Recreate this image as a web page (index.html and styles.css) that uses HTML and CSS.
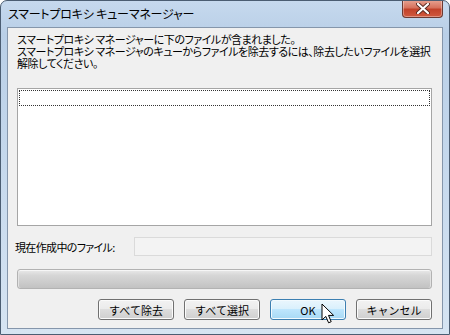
FILE: index.html
```html
<!DOCTYPE html>
<html lang="ja">
<head>
    <meta charset="UTF-8">
    <meta name="viewport" content="width=device-width, initial-scale=1.0">
    <title>スマートプロキシ キューマネージャー</title>
    <link rel="stylesheet" href="styles.css">
</head>
<body>
    <div class="window">
        <div class="titlebar">
            <span class="title">スマートプロキシ キューマネージャー</span>
            <div class="close">
                <svg width="14" height="11" viewBox="0 0 14 11">
                    <path d="M2 1 L12 10 M12 1 L2 10" stroke="#5a2a22" stroke-width="4" stroke-linecap="round"/>
                    <path d="M2 1 L12 10 M12 1 L2 10" stroke="#ffffff" stroke-width="2.2" stroke-linecap="round"/>
                </svg>
            </div>
        </div>

        <div class="client">
            <div class="message">
                <p>スマートプロキシ マネージャーに下のファイルが含まれました。</p>
                <p>スマートプロキシ マネージャのキューからファイルを除去するには、除去したいファイルを選択</p>
                <p>解除してください。</p>
            </div>

            <div class="listbox">
                <div class="list-row focused"></div>
            </div>

            <div class="field-row">
                <span class="field-label">現在作成中のファイル:</span>
                <div class="textbox"></div>
            </div>

            <div class="progress"></div>

            <div class="buttons">
                <button class="btn">すべて除去</button>
                <button class="btn">すべて選択</button>
                <button class="btn btn-hover">OK</button>
                <button class="btn">キャンセル</button>
            </div>
        </div>

        <!-- mouse pointer over the OK button -->
        <svg class="cursor" width="14" height="22" viewBox="0 0 14 22">
            <path d="M1 1 L1 17 L4.8 13.4 L7.6 19.8 L10.2 18.7 L7.5 12.4 L12.6 12.4 Z" fill="#ffffff" stroke="#000000" stroke-width="1" stroke-linejoin="miter"/>
        </svg>
    </div>
</body>
</html>
```

FILE: styles.css
```css
body {
    margin: 0;
    background-color: #ffffff;
    font-family: "Noto Sans CJK JP", "Noto Sans", sans-serif;
    font-feature-settings: "palt";
}
.window {
    position: relative;
    width: 450px;
    height: 335px;
    box-sizing: border-box;
    border: 1px solid #4b5d72;
    border-radius: 7px 7px 0 0;
    background: linear-gradient(to bottom, #c6d9ee 0%, #b9cfe7 10%, #c9dbee 60%, #d6e4f2 100%);
    display: flex;
    flex-direction: column;
    overflow: hidden;
}
.titlebar {
    height: 26px;
    display: flex;
    justify-content: space-between;
    align-items: flex-start;
    padding-left: 7px;
    padding-right: 6px;
}
.title {
    font-size: 12px;
    line-height: 12px;
    margin-top: 7px;
    color: #000000;
    letter-spacing: -0.2px;
}
.close {
    width: 41px;
    height: 18px;
    margin-top: -1px;
    box-sizing: border-box;
    border: 1px solid #6b3a33;
    border-top: none;
    border-radius: 0 0 4px 4px;
    background: linear-gradient(to bottom, #e8a493 0%, #d7725d 45%, #c2422a 55%, #d0593f 100%);
    display: flex;
    align-items: center;
    justify-content: center;
    box-shadow: inset 0 0 0 1px rgba(255, 255, 255, 0.35);
}
.client {
    flex: 1;
    margin: 0 6px 5px 6px;
    border: 1px solid #8596ab;
    background-color: #f0f0f0;
    padding: 5px 10px 0 9px;
    display: flex;
    flex-direction: column;
}
.message {
    font-size: 11px;
    line-height: 12px;
    letter-spacing: -0.46px;
    color: #000000;
}
.message p {
    margin: 0;
    white-space: nowrap;
}
.listbox {
    margin-top: 19px;
    height: 134px;
    border: 1px solid #a5a5a5;
    background-color: #ffffff;
    padding: 1px;
}
.list-row {
    height: 14px;
}
.focused {
    border: 1px dotted #333333;
}
.field-row {
    display: flex;
    align-items: center;
    margin-top: 11px;
    gap: 19px;
}
.field-label {
    font-size: 11px;
    letter-spacing: -0.65px;
    color: #000000;
    margin-left: -2px;
    white-space: nowrap;
}
.textbox {
    flex: 1;
    height: 17px;
    border: 1px solid #dadada;
    background-color: #f3f3f3;
}
.progress {
    margin-top: 13px;
    height: 18px;
    border: 1px solid #b2b2b2;
    border-radius: 3px;
    background: linear-gradient(to bottom, #e9e9e9 0%, #d6d6d6 30%, #cbcbcb 70%, #c2c2c2 100%);
    box-shadow: inset 0 1px 0 #f6f6f6, inset 1px 0 0 #e2e2e2, inset -1px 0 0 #e2e2e2;
}
.buttons {
    display: flex;
    justify-content: flex-end;
    gap: 10px;
    margin-top: 10px;
}
.btn {
    width: 76px;
    height: 21px;
    padding: 0;
    font-family: inherit;
    font-size: 11px;
    color: #000000;
    border: 1px solid #707070;
    border-radius: 3px;
    background: linear-gradient(to bottom, #f2f2f2 0%, #ebebeb 49%, #dddddd 50%, #cfcfcf 100%);
    box-shadow: inset 0 0 0 1px #fbfbfb;
}
.btn-hover {
    border-color: #3c7fb1;
    background: linear-gradient(to bottom, #eaf6fd 0%, #d9f0fc 49%, #bee6fd 50%, #a7d9f5 100%);
    box-shadow: inset 0 0 0 1px #f2fafe;
}
.cursor {
    position: absolute;
    left: 320px;
    top: 302px;
}
```
